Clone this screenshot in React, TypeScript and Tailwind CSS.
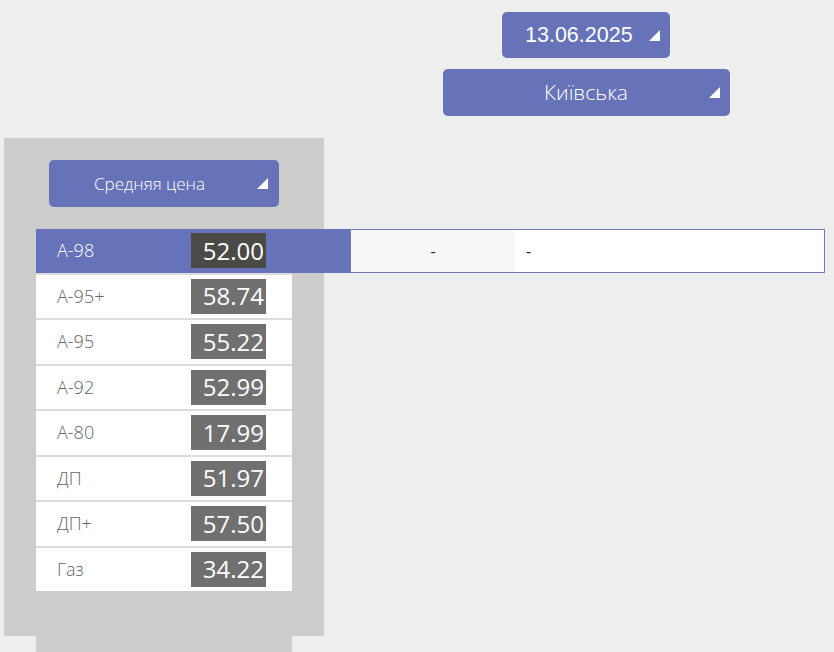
import React from 'react';

const fuels = [
  { name: 'А-98', price: '52.00' },
  { name: 'А-95+', price: '58.74' },
  { name: 'А-95', price: '55.22' },
  { name: 'А-92', price: '52.99' },
  { name: 'А-80', price: '17.99' },
  { name: 'ДП', price: '51.97' },
  { name: 'ДП+', price: '57.50' },
  { name: 'Газ', price: '34.22' },
];

const gothic = { fontFamily: '"Open Sans", "Lato", sans-serif' };

const Corner: React.FC<{ className?: string }> = ({ className }) => (
  <svg viewBox="0 0 12 12" className={className}>
    <polygon points="12,0 12,12 0,12" fill="#ffffff" />
  </svg>
);

export default function App() {
  const selected = 0;

  return (
    <div className="min-h-[652px] w-[834px] overflow-hidden bg-[#eeeeee] font-light" style={gothic}>
      {/* Date + region selectors */}
      <div className="flex flex-col items-center gap-[11px] pl-[338px] pt-[12px]">
        <button
          className="flex h-[46px] w-[168px] items-center rounded-[5px] bg-[#6673b8] pl-[23px] text-[21.5px] font-normal text-white"
          style={{ fontFamily: '"Liberation Sans", Arial, sans-serif' }}
        >
          <span>13.06.2025</span>
          <Corner className="ml-[16px] h-[11px] w-[11px]" />
        </button>
        <button className="relative flex h-[47px] w-[287px] items-center justify-center rounded-[5px] bg-[#6673b8] text-[21px] text-white">
          <span>Київська</span>
          <Corner className="absolute right-[10px] top-[18px] h-[11px] w-[11px]" />
        </button>
      </div>

      {/* Fuel panel */}
      <div className="mt-[22px] pl-[4px]">
        <div className="h-[498px] w-[320px] bg-[#cccccc] pt-[22px]">
          <button className="relative ml-[45px] flex h-[47px] w-[230px] items-center rounded-[5px] bg-[#6673b8] pl-[45px] text-[17px] text-white">
            <span>Средняя цена</span>
            <Corner className="absolute right-[11px] top-[18px] h-[11px] w-[11px]" />
          </button>

          <div className="ml-[32px] mt-[22px] flex w-[256px] flex-col gap-[2px] bg-[#dcdcdc]">
            {fuels.map((f, i) => {
              const active = i === selected;
              return (
                <div
                  key={f.name}
                  className={`relative flex h-[43.5px] items-center pl-[21px] ${active ? 'bg-[#6673b8]' : 'bg-white'}`}
                >
                  <span className={`w-[134px] text-[18px] ${active ? 'text-white' : 'text-[#666666]'}`}>{f.name}</span>
                  <span
                    className={`flex h-[35px] w-[75px] items-center justify-end pr-[2px] text-[24px] font-normal text-white ${active ? 'bg-[#4b4a47]' : 'bg-[#707070]'}`}
                  >
                    {f.price}
                  </span>
                  {active && (
                    <>
                      <div className="absolute left-[256px] top-0 h-full w-[58px] bg-[#6673b8]" />
                      <div className="absolute left-[314px] top-0 flex h-full w-[475px] border-[1.5px] border-[#7079b8] bg-white text-[16px] font-normal text-[#222222]">
                        <div className="flex w-[164px] items-center justify-center bg-[#f7f7f7]">-</div>
                        <div className="flex items-center pl-[11px]">-</div>
                      </div>
                    </>
                  )}
                </div>
              );
            })}
          </div>
        </div>
        <div className="ml-[32px] h-[20px] w-[256px] bg-[#cccccc]" />
      </div>
    </div>
  );
}
